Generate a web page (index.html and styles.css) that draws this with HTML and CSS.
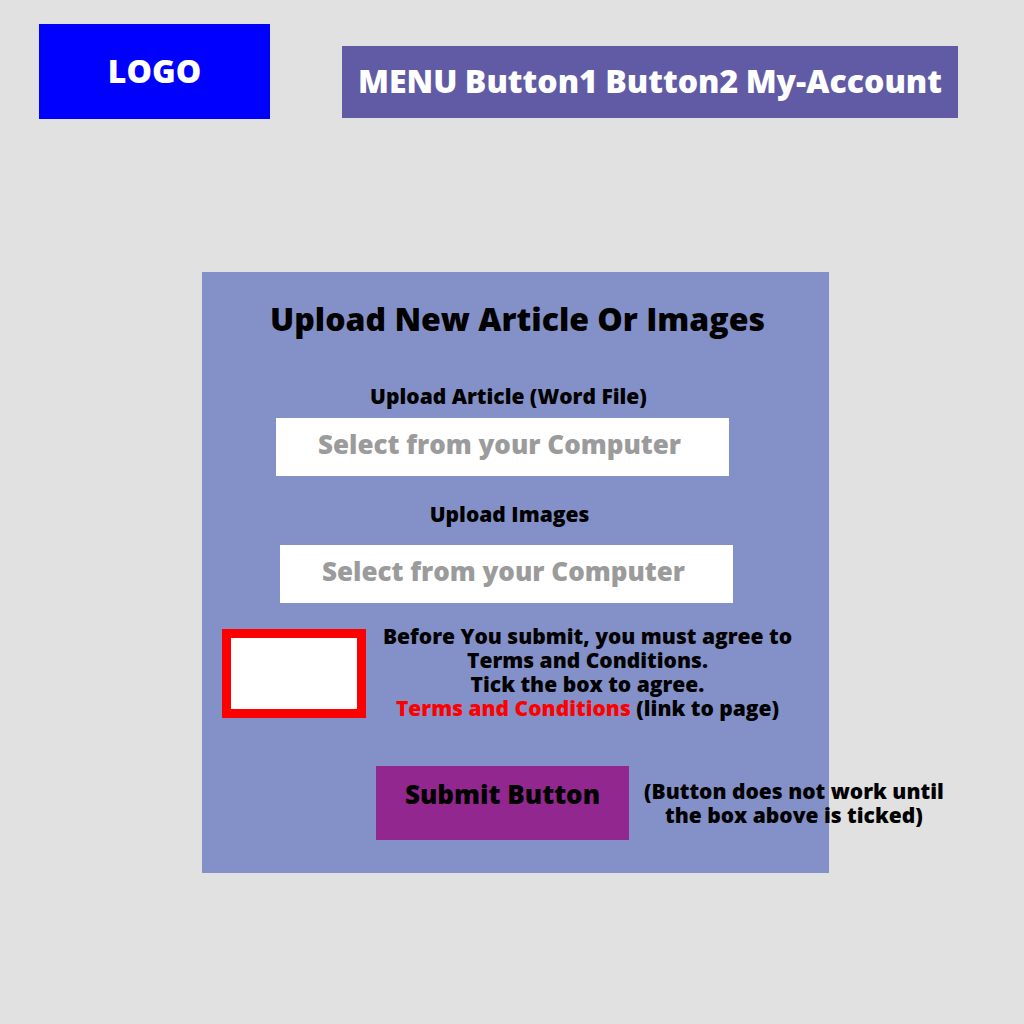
FILE: index.html
```html
<!DOCTYPE html>
<html lang="en">
<head>
  <meta charset="utf-8">
  <meta name="viewport" content="width=device-width, initial-scale=1">
  <title>Upload New Article Or Images</title>
  <link rel="stylesheet" href="styles.css">
</head>
<body>
  <header class="site-header">
    <a class="logo" href="#">LOGO</a>
    <nav class="menu">
      <span>MENU</span>
      <a href="#">Button1</a>
      <a href="#">Button2</a>
      <a href="#">My-Account</a>
    </nav>
  </header>
  <main class="page">
    <form class="card">
      <h1 class="title">Upload New Article Or Images</h1>
      <div class="field">
        <label for="article">Upload Article (Word File)</label>
        <input class="picker" id="article" type="text" readonly placeholder="Select from your Computer">
      </div>
      <div class="field field-images">
        <label for="images">Upload Images</label>
        <input class="picker" id="images" type="text" readonly placeholder="Select from your Computer">
      </div>
      <div class="agreement">
        <input class="tick" id="agree" type="checkbox">
        <div class="terms">
          <label for="agree">Before You submit, you must agree to<br>Terms and Conditions.<br>Tick the box to agree.</label>
          <p><a href="#">Terms and Conditions</a> (link to page)</p>
        </div>
      </div>
      <div class="actions">
        <button class="submit" type="button">Submit Button</button>
        <p class="note">(Button does not work until<br>the box above is ticked)</p>
      </div>
    </form>
  </main>
</body>
</html>
```
FILE: styles.css
```css
* {
  box-sizing: border-box;
}

body {
  margin: 0;
  background: #e1e1e1;
  color: #000;
  font: 800 21px/24px "Arial Black", "Open Sans", "Liberation Sans", sans-serif;
}

h1,
p {
  margin: 0;
}

a {
  color: inherit;
  text-decoration: none;
}

.site-header {
  display: flex;
  align-items: flex-end;
  gap: 72px;
  padding: 24px 66px 0 39px;
  color: #fff;
  font-size: 32px;
  line-height: 40px;
}

.logo {
  flex: 0 0 231px;
  padding: 27px 0 28px;
  background: #0000fe;
  text-align: center;
}

.menu {
  display: flex;
  flex: 1;
  justify-content: space-between;
  margin-bottom: 1px;
  padding: 15px 16px 17px;
  background: #615ba6;
}

.page {
  padding: 153px 0 40px 202px;
}

.card {
  max-width: 627px;
  padding: 27px 20px 33px;
  background: #8391c8;
}

.title {
  margin-bottom: 45px;
  padding-left: 4px;
  font-size: 32px;
  font-weight: 800;
  line-height: 40px;
  text-align: center;
}

.field {
  display: flex;
  flex-direction: column;
  align-items: center;
  gap: 10px;
  margin: 0 26px 26px 0;
}

.field label {
  padding-left: 12px;
}

.field-images {
  gap: 19px;
  margin: 0 18px 21px 0;
}

.field-images label {
  padding-left: 6px;
}

.picker {
  width: 100%;
  max-width: 453px;
  height: 58px;
  padding: 0 6px 6px 0;
  border: 0;
  background: #fff;
  font: inherit;
  font-size: 26px;
  text-align: center;
}

.picker::placeholder {
  color: #9b9b9b;
  opacity: 1;
}

.agreement {
  display: flex;
  align-items: center;
}

.tick {
  flex: none;
  width: 144px;
  height: 89px;
  margin: 2px 0 0;
  border: 9px solid #fe0000;
  background: #fff;
  appearance: none;
}

.tick:checked {
  background: #615ba6;
}

.terms {
  flex: 1;
  text-align: center;
}

.terms label {
  display: block;
}

.terms a {
  color: #fe0000;
}

.actions {
  display: flex;
  align-items: center;
  gap: 15px;
  margin-top: 46px;
  padding-left: 154px;
}

.submit {
  flex: 0 0 253px;
  height: 74px;
  padding: 0 0 18px;
  border: 0;
  background: #92278f;
  color: #000;
  font: inherit;
  font-size: 26px;
}

.note {
  flex: none;
  text-align: center;
}
```
